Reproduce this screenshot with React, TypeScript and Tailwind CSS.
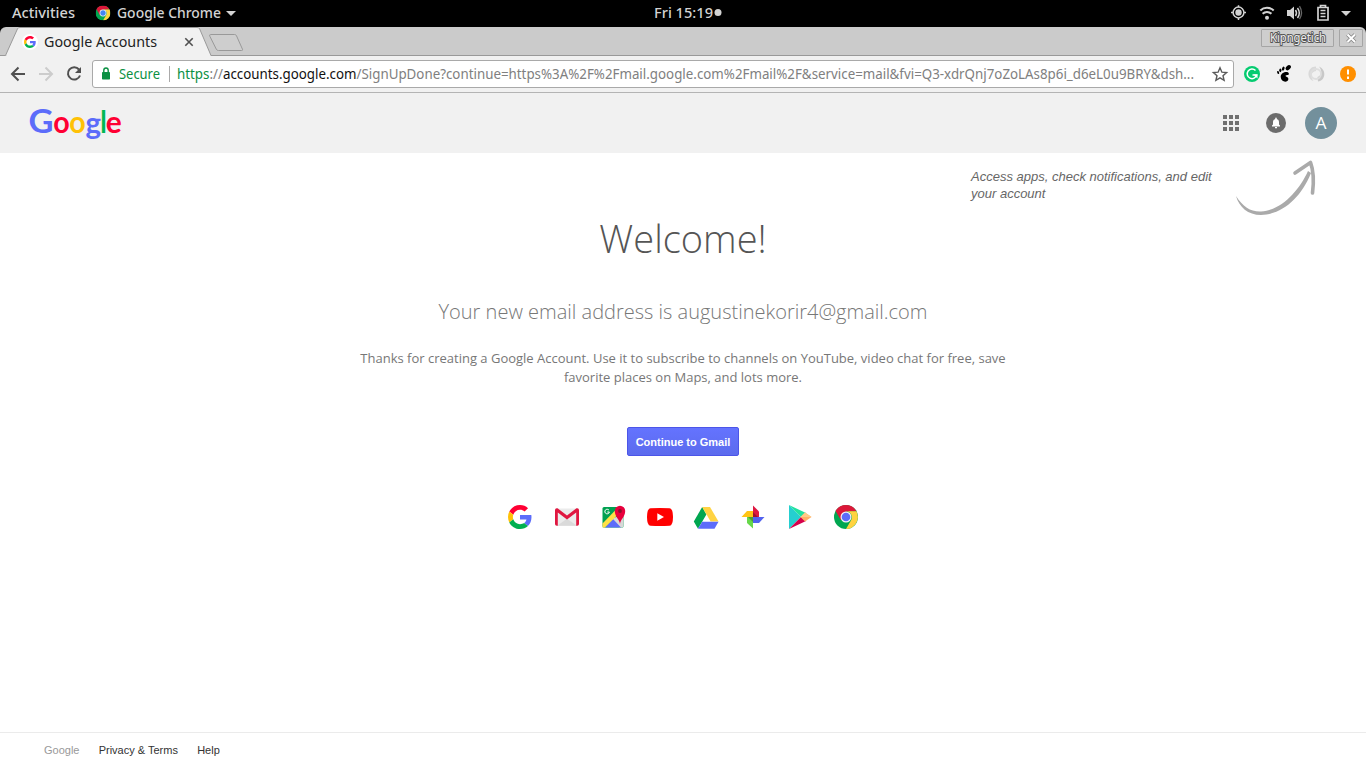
import React from "react";

type IconProps = { className?: string };

function T({ x, y, w, size, fill = "#fff", family = "Noto Sans", weight = 400, children }: { x: number; y: number; w: number; size: number; fill?: string; family?: string; weight?: number; children: React.ReactNode }) {
  return (
    <text x={x} y={y} textLength={w} lengthAdjust="spacingAndGlyphs" fontSize={size} fill={fill} fontFamily={`"${family}", sans-serif`} fontWeight={weight}>
      {children}
    </text>
  );
}

function GMark({ className }: IconProps) {
  return (
    <svg viewBox="0 0 48 48" className={className}>
      <path fill="#ff0033" d="M24 9.5c3.54 0 6.71 1.22 9.21 3.6l6.85-6.85C35.9 2.38 30.47 0 24 0 14.62 0 6.51 5.38 2.56 13.22l7.98 6.19C12.43 13.72 17.74 9.5 24 9.5z" />
      <path fill="#5c6cfa" d="M46.98 24.55c0-1.57-.15-3.09-.38-4.55H24v9.02h12.94c-.58 2.96-2.26 5.48-4.78 7.18l7.73 6c4.51-4.18 7.09-10.36 7.09-17.65z" />
      <path fill="#ffc107" d="M10.53 28.59A14.5 14.5 0 0 1 9.77 24c0-1.6.27-3.14.76-4.59l-7.98-6.19A23.9 23.9 0 0 0 0 24c0 3.88.92 7.54 2.56 10.78l7.97-6.19z" />
      <path fill="#00b050" d="M24 48c6.48 0 11.93-2.13 15.89-5.81l-7.73-6c-2.15 1.45-4.92 2.3-8.16 2.3-6.26 0-11.57-4.22-13.47-9.91l-7.98 6.19C6.51 42.62 14.62 48 24 48z" />
    </svg>
  );
}

function ChromeMark({ className, blue = "#5c6cfa" }: IconProps & { blue?: string }) {
  return (
    <svg viewBox="0 0 24 24" className={className}>
      <circle cx="12" cy="12" r="12" fill="#00a650" />
      <path fill="#dc1739" d="M1.6 6A12 12 0 0 1 22.4 6.2L12 6.6 6.8 15Z" />
      <path fill="#ffd340" d="M22.4 6.2A12 12 0 0 1 12 24l5.2-9a6 6 0 0 0-5.2-8.8Z" />
      <circle cx="12" cy="12" r="5.5" fill="#f3f3f3" />
      <circle cx="12" cy="12" r="4.3" fill={blue} />
    </svg>
  );
}

function SystemBar() {
  return (
    <header className="relative flex h-[27px] items-center bg-black font-['Noto_Sans',sans-serif] text-[#d3d3d3]">
      <svg className="h-[27px] w-[240px]">
        <T x={12} y={18} w={63} size={14.5} fill="#d3d3d3" weight={500}>Activities</T>
        <T x={117} y={18} w={104} size={14.5} fill="#d3d3d3" weight={500}>Google Chrome</T>
        <path d="M226 11h10l-5 5z" fill="#d3d3d3" />
        <svg x="95.500" y="5.500" width="15" height="15"><ChromeMark blue="#4285f4" /></svg>
      </svg>
      <svg className="ml-[410px] h-[27px] w-[80px]">
        <T x={4} y={18} w={59} size={14.5} fill="#d3d3d3" weight={500}>Fri 15:19</T>
        <circle cx="68" cy="12.500" r="3.500" fill="#d3d3d3" />
      </svg>
      <svg className="ml-auto h-[27px] w-[146px]" fill="none" stroke="#d3d3d3">
        <circle cx="18.500" cy="12.500" r="5.400" strokeWidth="1.500" />
        <circle cx="18.500" cy="12.500" r="3.200" fill="#d3d3d3" stroke="none" />
        <path d="M18.500 5.200v2M18.500 18v2M11 12.500h2M24 12.500h2" strokeWidth="1.500" />
        <path d="M40.300 10.500a9.500 9.500 0 0 1 13.400 0M42.600 13.800a6.200 6.200 0 0 1 8.800 0" strokeWidth="2" />
        <circle cx="47" cy="17.800" r="2" fill="#d3d3d3" stroke="none" />
        <path d="M67 10h3l4-3.500v13L70 16h-3z" fill="#d3d3d3" stroke="none" />
        <path d="M75.500 10q2 3 0 6M77.500 8q3.600 5 0 10" strokeWidth="1.500" />
        <path d="M79.500 6.200q4 6.500 0 13" stroke="#666" strokeWidth="1.300" />
        <path d="M98 7.500h10v12.500H98zM100.500 7V5.500h5V7M100.500 10.500h5M100.500 13.500h5M100.500 16.500h5" strokeWidth="1.700" />
        <path d="M121 11h10l-5 5z" fill="#d3d3d3" stroke="none" />
      </svg>
    </header>
  );
}

function TabStrip() {
  return (
    <div className="bg-black">
      <div className="flex h-[29px] rounded-t-[6px] bg-[#cbcbcb]">
        <svg className="h-[29px] w-[250px]">
          <path d="M0 28.500h5.500L17.500 1.800Q18 .5 20 .5h177q2 0 2.600 1.300l11.400 26.700h39" fill="#f1f1f1" stroke="#999" />
          <path d="M7 29h203" stroke="#f1f1f1" strokeWidth="2" />
          <path d="M210.500 7.500h24q1.500 0 2 1.300l6 13.500q.5 1.200-1 1.200h-23q-1.600 0-2.200-1.300l-6.500-13q-.6-1.700.7-1.700z" fill="#cecece" stroke="#999" />
          <circle cx="30" cy="15" r="8" fill="#fff" />
          <svg x="24" y="9" width="12" height="12"><GMark /></svg>
          <T x={44} y={20} w={113} size={15} fill="#222">Google Accounts</T>
          <path d="m185.300 11.300 7.400 7.400m0-7.400-7.400 7.400" stroke="#505050" strokeWidth="1.600" />
        </svg>
        <div className="flex-1 border-b border-[#999]" />
        <div className="flex h-[29px] gap-[5px] border-b border-[#999] pt-[2px] pr-[3px]">
          <div className="h-[18px] w-[73px] rounded-[1px] border border-[#a5a5a5] bg-[#cecece]">
            <svg className="h-4 w-[71px]">
              <g stroke="#555" strokeWidth="2" strokeLinejoin="round" paintOrder="stroke"><T x={8} y={12} w={56} size={12.5} fill="#eee">Kipngetich</T></g>
            </svg>
          </div>
          <div className="h-[18px] w-[24px] rounded-[1px] border border-[#a5a5a5] bg-[#cecece]">
            <svg className="h-4 w-[22px]"><path d="m7.500 4.500 7.500 7.500m0-7.500L7.500 12" stroke="#888" strokeWidth="3.800" /><path d="m7.500 4.500 7.500 7.500m0-7.500L7.500 12" stroke="#fff" strokeWidth="2" /></svg>
          </div>
        </div>
      </div>
    </div>
  );
}

function Toolbar() {
  return (
    <div className="flex h-[37px] items-center border-b border-[#b4b4b4] bg-[#f1f1f1]">
      <svg className="h-[36px] w-[92px] shrink-0" fill="none" strokeWidth="2">
        <path d="M25 18H12.500M18.500 11.500 12 18l6.500 6.500" stroke="#505050" />
        <path d="M39 18h12.500M45.500 11.500 52 18l-6.500 6.500" stroke="#ccc" />
        <path d="M79 13.500A6.200 6.200 0 1 0 80 19.500" stroke="#505050" />
        <path d="M81 11v6h-6z" fill="#505050" />
      </svg>
      <div className="h-[28px] w-[1142px] rounded-[3px] border border-[#a9a9a9] bg-white">
        <svg className="h-[26px] w-[1140px]">
          <rect x="9" y="11" width="8" height="7.500" rx=".7" fill="#0b9043" />
          <path d="M10.800 11V9.200a2.200 2.200 0 0 1 4.400 0V11" fill="none" stroke="#0b9043" strokeWidth="1.400" />
          <T x={26} y={18} w={41} size={14} fill="#0b9043">Secure</T>
          <path d="M76.500 5v16" stroke="#aaa" />
          <T x={84} y={18} w={1017} size={13.6} fill="#808080">
            <tspan fill="#0b9043">https</tspan>://<tspan fill="#111">accounts.google.com</tspan>/SignUpDone?continue=https%3A%2F%2Fmail.google.com%2Fmail%2F&amp;service=mail&amp;fvi=Q3-xdrQnj7oZoLAs8p6i_d6eL0u9BRY&amp;dsh...
          </T>
          <path d="m1127 6.800 1.900 4.400 4.700.4-3.600 3.100 1.100 4.700-4.100-2.500-4.100 2.500 1.100-4.700-3.600-3.100 4.700-.4z" fill="none" stroke="#5a5a5a" strokeWidth="1.400" />
        </svg>
      </div>
      <svg className="h-[36px] w-[132px]" fill="none">
        <circle cx="18" cy="18" r="8" fill="#05cb70" />
        <path d="M21.500 14.500A4.800 4.800 0 1 0 22.700 19H18.500" stroke="#fff" strokeWidth="1.500" />
        <path d="M19.500 18.500h4v4z" fill="#fff" />
        <g fill="#000" transform="translate(50 18) scale(1.220) translate(-50 -18)">
          <ellipse cx="53.500" cy="12.800" rx="2.500" ry="1.700" transform="rotate(-45 53.500 12.800)" />
          <ellipse cx="49.400" cy="13.600" rx="1" ry="1.700" transform="rotate(20 49.400 13.600)" />
          <ellipse cx="47" cy="15" rx=".9" ry="1.500" />
          <ellipse cx="45.200" cy="16.800" rx=".8" ry="1.300" transform="rotate(-20 45.200 16.800)" />
          <path d="M54 18c0-3-7-1.500-6.700 2.500.2 4.500 6 5 6.300 1.600 0-1.800-2.300-1.500-2.300-2.600 0-1 2.700-.1 2.700-1.500z" />
        </g>
        <path d="M82 10.500c-9 0-10 12-2.500 14.500-3-4-3-9 2.500-10z" fill="#d9d9d9" />
        <path d="M84 25.500c8-1 8.500-12 1-15 3 4 3.500 8.500-1.500 10.500z" fill="#c8c8c8" />
        <circle cx="82" cy="18" r="5" stroke="#dedede" strokeWidth="1.800" />
        <circle cx="114" cy="18" r="8" fill="#ff8f00" />
        <path d="M114 13.500v5M114 20.500v2.500" stroke="#fff" strokeWidth="2" />
      </svg>
    </div>
  );
}

function AccountBar() {
  return (
    <div className="flex h-[60px] items-center justify-between bg-[#f1f1f1]">
      <svg className="h-[60px] w-[150px]" aria-label="Google">
        <T x={28.500} y={39.500} w={25} size={32.500} family="Lato" weight={700} fill="#5c6cfa">G</T>
        <T x={53.200} y={39.500} w={16.500} size={30} family="Lato" weight={700} fill="#ff0033">o</T>
        <T x={69.300} y={39.500} w={16.500} size={30} family="Lato" weight={700} fill="#ffc107">o</T>
        <T x={85.500} y={40.500} w={15.500} size={30} family="Lato" weight={700} fill="#5c6cfa">g</T>
        <T x={100.300} y={39.500} w={6.500} size={30} family="Lato" weight={700} fill="#00b853">l</T>
        <T x={105.800} y={39.500} w={16} size={30} family="Lato" weight={700} fill="#ff0033">e</T>
      </svg>
      <svg className="h-[60px] w-[156px]">
        <path d="M13 22h4v4h-4zm6 0h4v4h-4zm6 0h4v4h-4zM13 28h4v4h-4zm6 0h4v4h-4zm6 0h4v4h-4zM13 34h4v4h-4zm6 0h4v4h-4zm6 0h4v4h-4z" fill="#707070" />
        <circle cx="66" cy="30" r="10" fill="#6c6c6c" />
        <path d="M62 33.500v-1l1-1v-2.700a3 3 0 0 1 2.200-2.900v-.5a.8.800 0 0 1 1.600 0v.5a3 3 0 0 1 2.200 2.900v2.700l1 1v1z" fill="#fff" />
        <path d="M65 34h2v1.300h-2z" fill="#fff" />
        <circle cx="111" cy="30" r="16" fill="#73909c" />
        <T x={105.500} y={36} w={11} size={17} family="Open Sans">A</T>
      </svg>
    </div>
  );
}

function ProductIcons() {
  return (
    <div className="mt-[49px] flex h-6 items-center gap-[22.6px]">
      <GMark className="size-6" />
      <svg viewBox="0 0 24 24" className="size-6">
        <path d="M1.500 3.500h21v17.300h-21z" fill="#ebebeb" /><path d="m2 20.800 10-7 10 7" fill="#dadada" />
        <path d="M0 5v14q0 1.800 1.800 1.800h1V7.500l9.200 7 9.200-7v13.300h1Q24 20.800 24 19V5q0-1.800-1.800-1.800h-.7L12 10.500 2.500 3.200h-.7Q0 3.200 0 5z" fill="#e01740" />
      </svg>
      <svg viewBox="0 0 24 24" className="size-6 overflow-visible">
        <rect x="1.500" y="2" width="21" height="20.500" rx="1.500" fill="#00a150" />
        <path d="M22.500 10v10.500q0 2-2 2H18L10 13.500z" fill="#d8d8d8" /><path d="m12 14 8 8.500H4z" fill="#5c6cfa" />
        <path d="M1.500 22.500v-4L17 2.500h5v2L4 22.500z" fill="#ffe047" />
        <path d="M19 19c-.5-5-5.200-7-5.200-13a5.200 5.200 0 0 1 10.400 0c0 6-4.700 8-5.200 13z" fill="#e8003d" /><circle cx="19" cy="6" r="1.900" fill="#8c102a" />
        <path d="M8 5.200A2.300 2.300 0 1 0 8.400 7H6.300" fill="none" stroke="#fff" strokeWidth="1" />
      </svg>
      <svg viewBox="0 0 24 24" className="size-6 overflow-visible"><path d="M2.500 3.200Q12 2.800 21.500 3.200 25 3.500 25 12T21.500 20.800Q12 21.200 2.500 20.800-1 20.500-1 12T2.500 3.200z" fill="#f00" /><path d="m9.300 8.200 6.700 3.800-6.700 3.800z" fill="#fff" /></svg>
      <svg viewBox="0 0 24 24" className="size-6 overflow-visible">
        <path d="M8.200 2-.2 16.500l4.200 7.300 8.400-14.300z" fill="#00a650" /><path d="M8.200 2h7.800l8.500 14.500h-7.900z" fill="#ffd342" /><path d="M8.200 16.700h16.300l-4 7.100H4z" fill="#5c6cfa" />
      </svg>
      <svg viewBox="0 0 24 24" className="size-6">
        <path d="m12 .5 6 6V12h-6z" fill="#df1740" /><path d="M12 12h11.500L18 18h-6z" fill="#5262ef" /><path d="M12 12v11.500L6 18v-6z" fill="#67d84a" /><path d="M12 12H.5L6 6h6z" fill="#ffc414" /><path d="M12 7v5h5zM12 12v5l-5-5z" fill="#000" opacity=".28" />
      </svg>
      <svg viewBox="0 0 24 24" className="size-6 overflow-visible">
        <path d="M2 0v24l12-12z" fill="#25cfd0" /><path d="m2 0 17 8-5 4z" fill="#20e2a0" /><path d="m2 24 12-12 5 4z" fill="#d5004b" /><path d="m18 7.500 6.500 4.500-6.500 4.500-4.500-4.500z" fill="#ffb067" /><path d="m18 7.500 6.500 4.500h-11z" fill="#ffca86" />
      </svg>
      <ChromeMark className="size-6" />
    </div>
  );
}

export default function App() {
  return (
    <div className="flex h-[768px] w-[1366px] flex-col overflow-hidden bg-white">
      <SystemBar />
      <TabStrip />
      <Toolbar />
      <AccountBar />
      <main className="relative flex flex-1 flex-col items-center font-['Open_Sans',sans-serif]">
        <aside className="absolute top-[15px] left-[971px] w-[250px] font-['Liberation_Sans',sans-serif] text-[13px] leading-[17px] text-[#666] italic">Access apps, check notifications, and edit<br />your account</aside>
        <svg className="absolute top-[5px] left-[1234px] h-[62px] w-[84px]" fill="#aaa">
          <path d="M2 38C9 49 17 54 27 53.500 47 52.500 65 33 74 13l3 2C67 40 48 56.500 27 57 14 57 5 49 2 38z" />
          <path d="M61 15 76.500 4.500c3 8 3.500 19 2 30.500" fill="none" stroke="#aaa" strokeWidth="3.600" strokeLinecap="round" strokeLinejoin="round" />
        </svg>
        <h1 className="mt-[58px] text-[38px] leading-[54px] font-light whitespace-nowrap text-[#555]">Welcome!</h1>
        <h2 className="mt-[33px] text-[20px] leading-[28px] font-light whitespace-nowrap text-[#777]">Your new email address is augustinekorir4@gmail.com</h2>
        <p className="mt-[23px] w-[660px] text-center text-[13px] leading-[19px] text-[#777]">Thanks for creating a Google Account. Use it to subscribe to channels on YouTube, video chat for free, save favorite places on Maps, and lots more.</p>
        <button className="mt-[40px] h-[29px] w-[112px] rounded-[2px] border border-[#4c55e8] bg-linear-to-b from-[#6473ff] to-[#5c6bed] pt-[2px] font-['Liberation_Sans',sans-serif] text-[11px] leading-[25px] font-bold whitespace-nowrap text-white">Continue to Gmail</button>
        <ProductIcons />
      </main>
      <footer className="flex h-[36px] items-center gap-[19.2px] border-t border-[#ebebeb] pl-[44px] font-['Liberation_Sans',sans-serif] text-[11px] text-[#333]"><span className="text-[#999]">Google</span><span>Privacy &amp; Terms</span><span>Help</span></footer>
    </div>
  );
}
